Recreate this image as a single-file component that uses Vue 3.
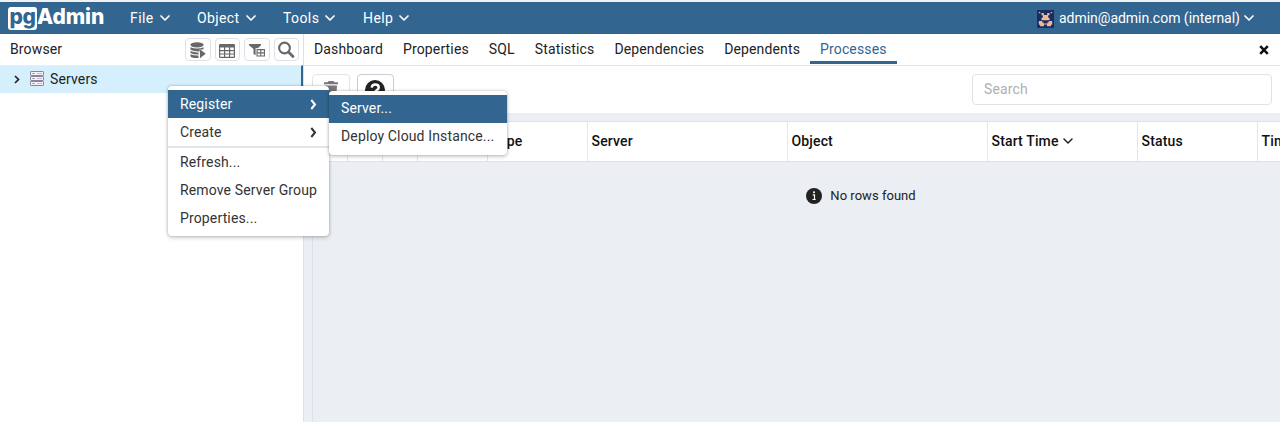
<script setup>
const menus = [
  { label: 'File', cls: 'file' },
  { label: 'Object', cls: 'object' },
  { label: 'Tools', cls: 'tools' },
  { label: 'Help', cls: 'help' },
]
const tabs = ['Dashboard', 'Properties', 'SQL', 'Statistics', 'Dependencies', 'Dependents', 'Processes']
const columns = [
  { label: '' }, { label: '' }, { label: '' }, { label: '' },
  { label: 'Type' }, { label: 'Server' }, { label: 'Object' },
  { label: 'Start Time', sorted: true }, { label: 'Status' }, { label: 'Time Taken (sec)' },
]
</script>

<template>
  <div class="app">
    <header class="topbar">
      <div class="logo"><span class="pg">pg</span><span class="admin">Admin</span></div>
      <nav class="menus">
        <div v-for="m in menus" :key="m.label" class="menu" :class="m.cls">
          <span>{{ m.label }}</span>
          <svg class="chev" viewBox="0 0 10 7"><path d="M1 1l4 4 4-4" /></svg>
        </div>
      </nav>
      <div class="user">
        <svg class="avatar" viewBox="0 0 17 18">
          <rect width="17" height="18" fill="#192d62" />
          <g fill="#efb994">
            <path d="M1.800 2h1.500v1.300H1.800zM13.700 2h1.500v1.300h-1.500zM4.500 3h2.300v2h3.400V3h2.300v2.200h-1.300v2.600h1.300v2.400H4.500V7.800h1.300V5.200H4.500z" />
            <path d="M1.800 11h3.400v1.300h1.300v1.200h4V12.300h1.300V11h3.400v3.800h-1.300v1.400H10v-1.700H7v1.700H3.100v-1.400H1.800z" />
          </g>
        </svg>
        <span class="email">admin@admin.com (internal)</span>
        <svg class="chev" viewBox="0 0 10 7"><path d="M1 1l4 4 4-4" /></svg>
      </div>
    </header>

    <div class="body">
      <aside class="browser">
        <div class="browser-head">
          <span class="title">Browser</span>
          <button class="tool">
            <svg viewBox="0 0 18 18">
              <ellipse cx="8" cy="3.800" rx="6.600" ry="2.600" />
              <path d="M1.500 6.200q6.500 2.700 13 0v2.400l-3.800-.3v2.200q-5.800.2-9.200-1.700zM1.500 10.100q3.600 1.600 8 1.400v2q-4.800.1-8-1.500zM1.500 13.200q3.600 1.600 8 1.400v2.400q-8 .3-8-2zM11 8.300l5.700 4.500-5.700 4.500z" />
            </svg>
          </button>
          <button class="tool">
            <svg viewBox="0 0 18 18">
              <path fill-rule="evenodd" d="M2.200 3h13.600q1.200 0 1.200 1.200v11.600q0 1.200-1.200 1.200H2.200Q1 17 1 15.800V4.200Q1 3 2.200 3zM2.200 6.500v2.500h3.800v-2.500zM7.200 6.500v2.500h3.800v-2.500zM12.200 6.500v2.500h3.600v-2.500zM2.200 10.200v2.300h3.800v-2.300zM7.200 10.200v2.300h3.800v-2.300zM12.200 10.200v2.300h3.600v-2.300zM2.200 13.600v2.200h3.800v-2.200zM7.200 13.600v2.200h3.800v-2.200zM12.200 13.600v2.200h3.600v-2.200z" />
            </svg>
          </button>
          <button class="tool">
            <svg viewBox="0 0 18 18">
              <path d="M1 3h12v1.300L9 8v7l-3.500-2V8L1 4.300z" />
              <rect x="7.600" y="7.200" width="10" height="9" fill="#fff" />
              <path fill-rule="evenodd" d="M8.500 8h8.500v7.500H8.500zM9.600 9.300v2h2.600v-2zM13.300 9.300v2h2.600v-2zM9.600 12.400v2h2.600v-2zM13.300 12.400v2h2.600v-2z" />
            </svg>
          </button>
          <button class="tool">
            <svg viewBox="0 0 18 18"><circle cx="7.500" cy="7" r="5.400" fill="none" stroke="#686868" stroke-width="2.100" /><path d="M11.700 11.200l4.300 4.300" stroke="#686868" stroke-width="2.800" stroke-linecap="round" /></svg>
          </button>
        </div>
        <div class="tree-row">
          <svg class="twisty" viewBox="0 0 6 9"><path d="M1 1l3.500 3.500L1 8" /></svg>
          <svg class="servers" viewBox="0 0 14 15">
            <g fill="#f3f1f6" stroke="#8a83a0"><rect x=".5" y=".5" width="13" height="4" rx=".6" /><rect x=".5" y="5.500" width="13" height="4" rx=".6" /><rect x=".5" y="10.500" width="13" height="4" rx=".6" /></g>
            <path d="M2.500 2.500h2M2.500 7.500h2M2.500 12.500h2" stroke="#8a83a0" />
            <path d="M7 2.500h5M7 7.500h5M7 12.500h5" stroke="#c5c0d0" />
          </svg>
          <span>Servers</span>
        </div>
      </aside>

      <main class="content">
        <div class="tabs">
          <div v-for="t in tabs" :key="t" class="tab" :class="{ active: t === 'Processes' }">{{ t }}</div>
          <svg class="close" viewBox="0 0 10 10"><path d="M1.200 1.200l7.600 7.600M8.800 1.200l-7.600 7.600" /></svg>
        </div>
        <div class="toolbar">
          <button class="action disabled">
            <svg viewBox="0 0 16 18"><path d="M5.500 1h5l1 1.300H15v2H1v-2h3.500zM2 5.500h12l-.8 11.500H2.800z" /></svg>
          </button>
          <button class="action">
            <svg class="question" viewBox="0 0 20 20"><circle cx="10" cy="10" r="10" /><path d="M6.700 7.600q.5-3.100 3.500-3.100 3.500 0 3.500 2.900 0 1.700-1.800 2.600-1.400.8-1.400 2" fill="none" stroke="#fff" stroke-width="2.500" /><circle cx="10.400" cy="15" r="1.500" fill="#fff" /></svg>
          </button>
          <input class="search" placeholder="Search" />
        </div>
        <div class="grid">
          <div class="grid-head">
            <div v-for="(c, i) in columns" :key="i" class="cell">
              <span>{{ c.label }}</span>
              <svg v-if="c.sorted" class="chev sort" viewBox="0 0 10 7"><path d="M1 1l4 4 4-4" /></svg>
            </div>
          </div>
          <div class="empty">
            <svg viewBox="0 0 16 16"><circle cx="8" cy="8" r="8" fill="#222" /><path d="M6.700 6.800h1.800v4.500M6.500 11.500h3.200" fill="none" stroke="#fff" stroke-width="1.200" /><circle cx="8" cy="4.300" r="1" fill="#fff" /></svg>
            <span>No rows found</span>
          </div>
        </div>
      </main>
    </div>

    <div class="popup context">
      <div class="item selected"><span>Register</span><svg class="arrow" viewBox="0 0 7 11"><path d="M1.300 1l3.700 4.500L1.300 10" /></svg></div>
      <div class="item"><span>Create</span><svg class="arrow" viewBox="0 0 7 11"><path d="M1.300 1l3.700 4.500L1.300 10" /></svg></div>
      <div class="separator"></div>
      <div class="item">Refresh...</div>
      <div class="item">Remove Server Group</div>
      <div class="item">Properties...</div>
    </div>
    <div class="popup submenu">
      <div class="item selected">Server...</div>
      <div class="item">Deploy Cloud Instance...</div>
    </div>
  </div>
</template>

<style>
body { margin: 0; overflow: hidden; }
</style>

<style scoped>
* { box-sizing: border-box; }
.app { position: relative; width: 1280px; height: 422px; overflow: hidden; display: flex; flex-direction: column; font: 14px/20px Roboto, sans-serif; letter-spacing: .14px; color: #222; background: #ebeef3; }
svg { display: block; flex: none; }
.topbar { height: 34px; flex: none; border-top: 2px solid #f0f1f1; background: #326690; color: #fff; display: flex; align-items: center; font-weight: 450; letter-spacing: .4px; padding-left: 8px; }
.logo { width: 122px; display: flex; align-items: center; font-family: Inter, sans-serif; font-weight: 800; letter-spacing: 0; }
.pg { width: 29px; height: 23px; margin-top: 1px; border-radius: 3px; background: #fff; color: #326690; font-size: 21px; line-height: 19px; text-align: center; letter-spacing: -.5px; }
.admin { font-size: 21px; line-height: 24px; margin-top: -2px; letter-spacing: -.1px; }
.menus { display: flex; }
.menu { display: flex; align-items: center; gap: 6px; }
.file { width: 67px; }
.object { width: 86px; }
.tools { width: 80px; }
.chev { width: 10px; height: 7px; fill: none; stroke: #fff; stroke-width: 1.700; stroke-linecap: round; stroke-linejoin: round; margin-top: 1px; }
.user { margin-left: auto; margin-right: 26px; display: flex; align-items: center; }
.email { width: 180px; font-weight: 400; letter-spacing: -.02px; white-space: nowrap; }
.avatar { width: 17px; height: 18px; margin-right: 5px; margin-top: 2px; }
.user .chev { margin-left: 5px; }
.body { display: flex; flex: 1; min-height: 0; }
.browser { width: 303px; flex: none; background: #fff; }
.browser-head { height: 31px; display: flex; align-items: center; gap: 4px; padding: 0 4px 0 10px; }
.title { margin-right: auto; padding-bottom: 1px; }
.tool { width: 25.500px; height: 23px; margin: 0; padding: 0; border: 1px solid #dde0e6; border-radius: 4px; background: #fff; display: flex; align-items: center; justify-content: center; }
.tool svg { width: 18px; height: 18px; fill: #686868; }
.tree-row { height: 28px; background: #d6effc; border-top: 1px solid #e4f1f8; border-right: 2px solid #326690; display: flex; align-items: center; padding: 0 0 2px 14px; }
.twisty { width: 6px; height: 9px; margin-top: 1px; fill: none; stroke: #222; stroke-width: 1.700; }
.servers { width: 14px; height: 15px; margin: 0 6px 0 10px; }
.content { flex: 1; min-width: 0; display: flex; flex-direction: column; border-left: 1px solid #dde0e6; }
.tabs { height: 32px; flex: none; background: #fff; border-bottom: 1px solid #e3e5e9; display: flex; }
.tab { padding: 5px 10px 0; height: 30px; border-bottom: 3px solid transparent; white-space: nowrap; }
.tab.active { color: #326690; border-color: #326690; }
.close { width: 10px; height: 10px; margin: 11px 11px 0 auto; fill: none; stroke: #111; stroke-width: 2.500; }
.toolbar { height: 47px; flex: none; background: #fff; display: flex; align-items: flex-start; gap: 7px; padding: 8px 8px 0; }
.action { width: 37.500px; height: 31px; margin: 0; padding: 0; border: 1px solid #c8cdd6; border-radius: 4px; background: #fff; display: flex; justify-content: center; }
.action svg { width: 16px; height: 18px; margin-top: 5px; fill: #222; }
.action .question { width: 20px; height: 20px; margin-top: 5px; }
.action.disabled { border-color: #e0e3e8; }
.action.disabled svg { fill: #777; }
.search { width: 300px; height: 31px; margin: 0 0 0 auto; border: 1px solid #dfe2e7; border-radius: 4px; padding: 0 11px 1px; font: 14px Roboto, sans-serif; letter-spacing: .14px; outline: 0; background: #fff; }
.search::placeholder { color: #afafaf; }
.grid { margin: 8px 0 0 8px; border-left: 1px solid #dde0e6; border-top: 1px solid #dde0e6; flex: 1; overflow: hidden; }
.grid-head { width: 1097px; height: 40px; display: grid; grid-template-columns: 34.500px 35px 35px 70px 100px 200px 200px 150px 120px 152.500px; background: #fff; border-bottom: 1px solid #dde0e6; }
.cell { border-right: 1px solid #e3e6eb; display: flex; align-items: center; padding: 0 0 2px 4px; font-weight: 500; letter-spacing: .15px; white-space: nowrap; color: #111; }
.sort { stroke: #222; margin-left: 4px; stroke-width: 1.500; margin-top: 2px; }
.empty { margin-top: 24px; width: 1096px; display: flex; justify-content: center; align-items: center; gap: 8px; font-size: 13px; letter-spacing: .03px; }
.empty svg { width: 16px; height: 16px; }
.popup { position: absolute; background: #fff; border-radius: 4px; padding: 4px 0; box-shadow: 0 0 3px rgba(0,0,0,.28), 0 2px 4px rgba(0,0,0,.16); color: #333; }
.context { left: 168px; top: 86px; width: 161px; height: 150px; }
.submenu { left: 329px; top: 91px; width: 178px; height: 64px; }
.item { height: 28px; display: flex; align-items: center; justify-content: space-between; padding: 0 12px; white-space: nowrap; }
.submenu .item { padding-bottom: 2px; }
.item.selected { background: #326690; color: #fff; font-weight: 450; }
.arrow { width: 7px; height: 11px; fill: none; stroke: currentColor; stroke-width: 2; }
.separator { height: 2px; background: #e2e5eb; }
</style>
